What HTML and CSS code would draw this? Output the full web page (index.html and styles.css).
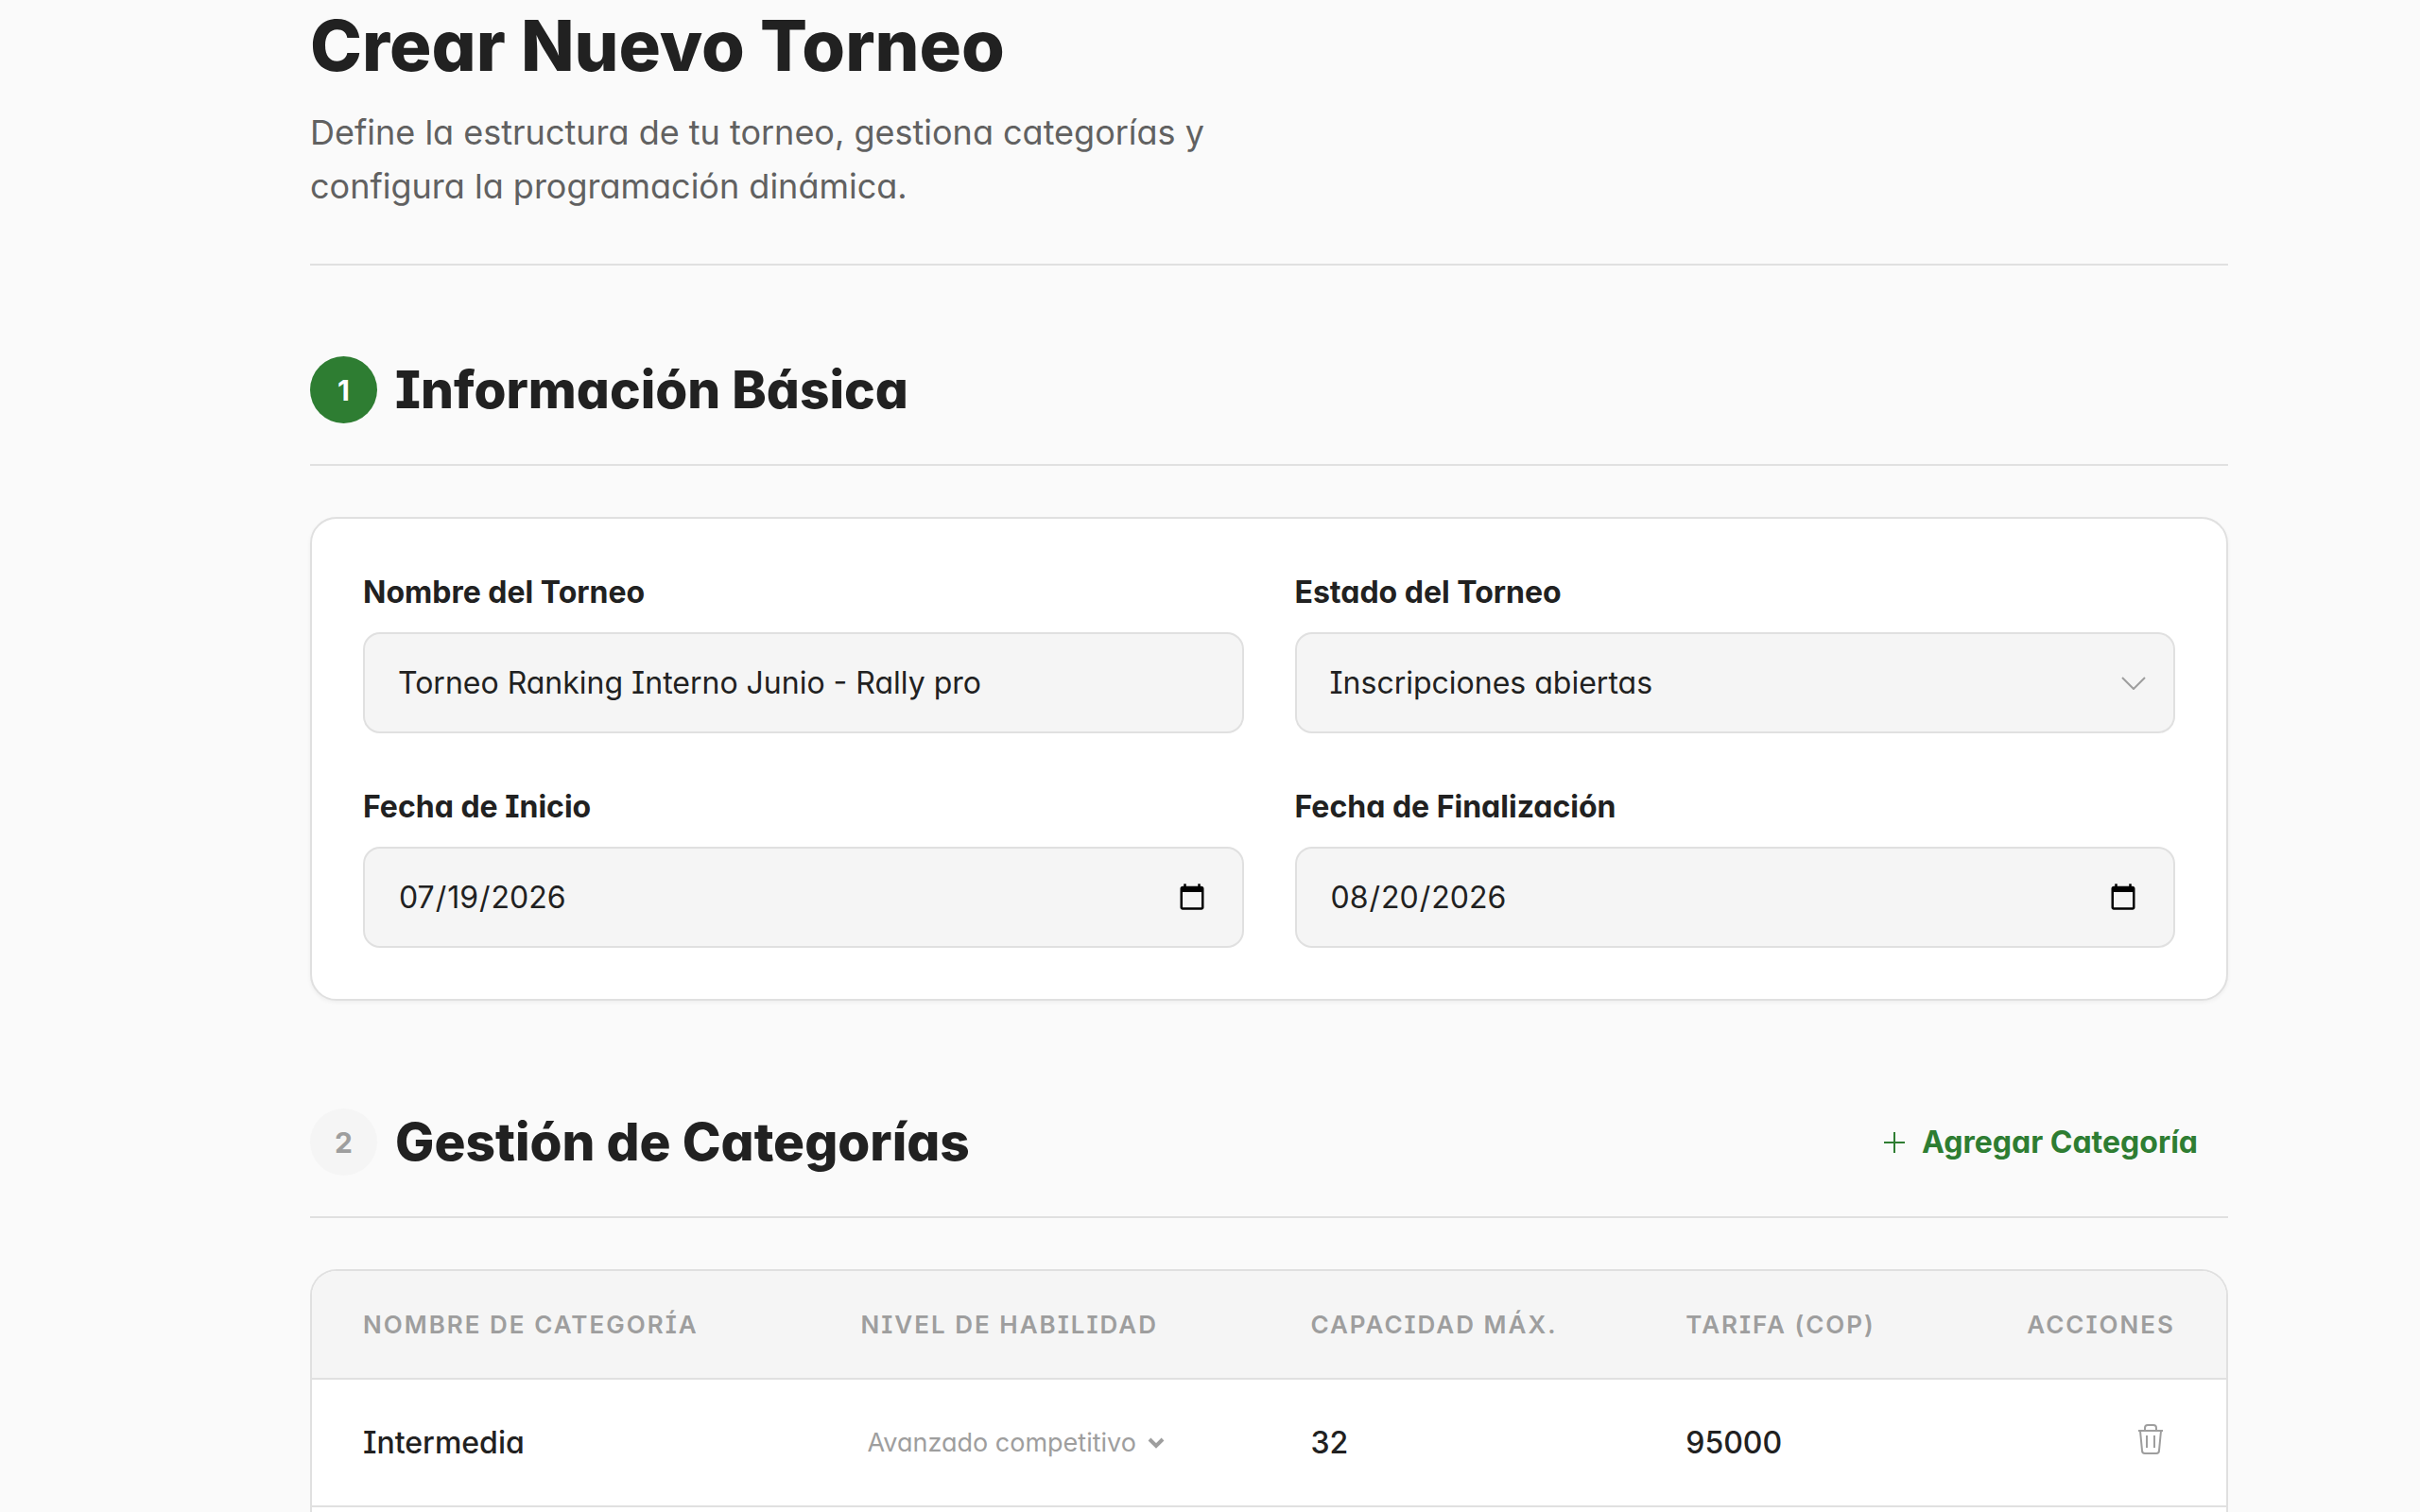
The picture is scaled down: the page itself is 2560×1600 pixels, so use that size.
FILE: index.html
```html
<!DOCTYPE html>
<html lang="es">
<head>
<meta charset="utf-8">
<meta name="viewport" content="width=device-width, initial-scale=1">
<title>Crear Nuevo Torneo</title>
<link rel="stylesheet" href="styles.css">
</head>
<body>
<main class="page">
  <header class="page-header">
    <h1 class="page-title">Crear Nuevo Torneo</h1>
    <p class="page-lead">Define la estructura de tu torneo, gestiona categorías y configura la programación dinámica.</p>
  </header>

  <section class="section">
    <div class="section-head">
      <span class="step step-active">1</span>
      <h2 class="section-title">Información Básica</h2>
    </div>
    <form class="card form-grid">
      <div class="field">
        <label class="label" for="nombre">Nombre del Torneo</label>
        <input class="control" id="nombre" type="text" value="Torneo Ranking Interno Junio - Rally pro">
      </div>
      <div class="field">
        <label class="label" for="estado">Estado del Torneo</label>
        <div class="select-wrap">
          <select class="control" id="estado">
            <option>Inscripciones abiertas</option>
          </select>
          <svg class="chevron" viewBox="0 0 26 14" aria-hidden="true"><path d="M1 1 13 13 25 1"/></svg>
        </div>
      </div>
      <div class="field">
        <label class="label" for="inicio">Fecha de Inicio</label>
        <input class="control" id="inicio" type="date" value="2026-07-19">
      </div>
      <div class="field">
        <label class="label" for="fin">Fecha de Finalización</label>
        <input class="control" id="fin" type="date" value="2026-08-20">
      </div>
    </form>
  </section>

  <section class="section section-fill">
    <div class="section-head">
      <span class="step">2</span>
      <h2 class="section-title">Gestión de Categorías</h2>
      <button class="add-button" type="button">
        <svg class="plus" viewBox="0 0 22 22" aria-hidden="true"><path d="M11 0V22M0 11H22"/></svg>
        Agregar Categoría
      </button>
    </div>
    <div class="table-card">
      <table class="table">
        <colgroup>
          <col class="col-name"><col class="col-level"><col class="col-capacity"><col class="col-fee"><col>
        </colgroup>
        <thead>
          <tr>
            <th scope="col">NOMBRE DE CATEGORÍA</th>
            <th scope="col">NIVEL DE HABILIDAD</th>
            <th scope="col">CAPACIDAD MÁX.</th>
            <th scope="col">TARIFA (COP)</th>
            <th scope="col" class="actions">ACCIONES</th>
          </tr>
        </thead>
        <tbody>
          <tr>
            <td>Intermedia</td>
            <td>
              <div class="level">
                <select class="level-select" aria-label="Nivel de habilidad">
                  <option>Avanzado competitivo</option>
                </select>
                <svg class="level-arrow" viewBox="0 0 18 12" aria-hidden="true"><path d="M2 2 9 9 16 2"/></svg>
              </div>
            </td>
            <td>32</td>
            <td>95000</td>
            <td class="actions">
              <button class="delete-button" type="button" aria-label="Eliminar categoría">
                <svg class="trash" viewBox="0 0 28 32" aria-hidden="true"><path d="M1 7H27M8 7V4Q8 1 11 1H17Q20 1 20 4V7M3 7 5 28Q5 31 8 31H20Q23 31 23 28L25 7M10 12V25M18 12V25"/></svg>
              </button>
            </td>
          </tr>
        </tbody>
      </table>
    </div>
  </section>
</main>
</body>
</html>
```
FILE: styles.css
```css
:root {
  --ink: #212121;
  --muted: #616161;
  --faint: #9e9e9e;
  --line: #e0e0e0;
  --fill: #f5f5f5;
  --green: #2e7d32;
}

* { box-sizing: border-box; }

body {
  margin: 0;
  background: #fafafa;
  color: var(--ink);
  font-family: Inter, "Open Sans", sans-serif;
  font-feature-settings: "cv08", "cv11";
}

input, select, button {
  font: inherit;
  font-feature-settings: inherit;
  color: inherit;
}

.page {
  display: flex;
  flex-direction: column;
  min-height: 100vh;
  padding: 0 203px 0 328px;
}

.page-header {
  padding-bottom: 53px;
  border-bottom: 2px solid var(--line);
}

.page-title {
  margin: 0 0 16px;
  font-size: 74px;
  line-height: 96px;
  font-weight: 800;
}

.page-lead {
  max-width: 1100px;
  margin: 0;
  color: var(--muted);
  font-size: 36px;
  line-height: 57px;
}

.section { margin-top: 96px; }

.section + .section { margin-top: 114px; }

.section-fill {
  display: flex;
  flex: 1;
  flex-direction: column;
}

.section-head {
  display: flex;
  align-items: center;
  gap: 19px;
  margin-bottom: 54px;
  padding-bottom: 43px;
  border-bottom: 2px solid var(--line);
}

.section-title {
  margin: 0;
  font-size: 55px;
  line-height: 71px;
  font-weight: 800;
}

.step {
  display: flex;
  align-items: center;
  justify-content: center;
  width: 71px;
  height: 71px;
  border-radius: 50%;
  background: var(--fill);
  color: var(--faint);
  font-size: 30px;
  font-weight: 700;
}

.step-active {
  background: var(--green);
  color: #fff;
}

.card {
  padding: 54px;
  border: 2px solid var(--line);
  border-radius: 28px;
  background: #fff;
  box-shadow: 0 2px 4px rgba(0, 0, 0, 0.05);
}

.form-grid {
  display: grid;
  grid-template-columns: 1fr 1fr;
  gap: 54px;
}

.field {
  display: flex;
  flex-direction: column;
  gap: 18px;
}

.label {
  font-size: 32px;
  line-height: 48px;
  font-weight: 700;
}

.control {
  width: 100%;
  height: 107px;
  padding: 0 35px;
  border: 2px solid var(--line);
  border-radius: 18px;
  background: var(--fill);
  font-size: 32px;
  appearance: none;
}

.select-wrap,
.level {
  display: grid;
  align-items: center;
}

.select-wrap > *,
.level > * { grid-area: 1 / 1; }

.chevron {
  justify-self: end;
  width: 26px;
  height: 14px;
  margin-right: 31px;
  fill: none;
  stroke: var(--faint);
  stroke-width: 2;
  pointer-events: none;
}

.add-button {
  display: flex;
  align-items: center;
  gap: 18px;
  margin-left: auto;
  padding: 0 32px;
  border: 0;
  background: none;
  color: var(--green);
  font-size: 32px;
  font-weight: 700;
}

.plus {
  width: 22px;
  height: 22px;
  fill: none;
  stroke: currentColor;
  stroke-width: 2;
}

.table-card {
  flex: 1;
  overflow: hidden;
  border: 2px solid var(--line);
  border-bottom: 0;
  border-radius: 28px 28px 0 0;
  background: #fff;
}

.table {
  width: 100%;
  border-collapse: collapse;
  table-layout: fixed;
}

.col-name { width: 26%; }
.col-level { width: 23.5%; }
.col-capacity { width: 19.6%; }
.col-fee { width: 14%; }

.table th,
.table td {
  padding: 0 0 0 54px;
  border-bottom: 2px solid var(--line);
  text-align: left;
}

.table th {
  height: 114px;
  background: var(--fill);
  color: var(--faint);
  font-size: 26px;
  font-weight: 600;
  letter-spacing: 2px;
}

.table td {
  height: 135px;
  font-size: 32px;
  font-weight: 500;
}

.table .actions {
  padding: 0 54px 0 0;
  text-align: right;
}

.level { justify-content: start; }

.level-select {
  padding: 0 29px 0 7px;
  border: 0;
  background: none;
  color: var(--faint);
  font-size: 27px;
  font-weight: 400;
  appearance: none;
}

.level-arrow {
  justify-self: end;
  width: 18px;
  height: 12px;
  fill: none;
  stroke: var(--faint);
  stroke-width: 4;
  pointer-events: none;
}

.delete-button {
  padding: 0 12px 8px;
  border: 0;
  background: none;
  color: var(--faint);
}

.trash {
  display: block;
  width: 28px;
  height: 32px;
  fill: none;
  stroke: currentColor;
  stroke-width: 2;
}
```
